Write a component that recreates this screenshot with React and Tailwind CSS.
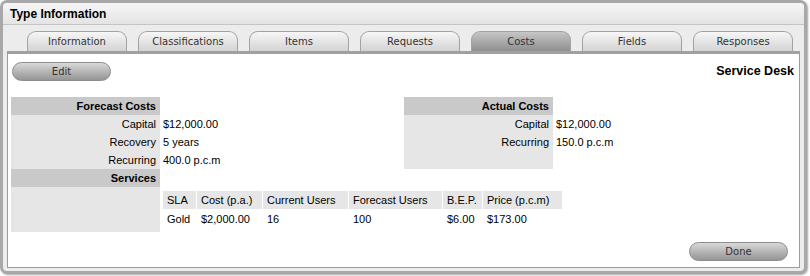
import React from "react";

const tabs = [
  "Information",
  "Classifications",
  "Items",
  "Requests",
  "Costs",
  "Fields",
  "Responses",
];

const services = {
  cols: [
    { label: "SLA", w: "w-[33px]" },
    { label: "Cost (p.a.)", w: "w-[65px]" },
    { label: "Current Users", w: "w-[85px]" },
    { label: "Forecast Users", w: "w-[93px]" },
    { label: "B.E.P.", w: "w-[39px]" },
    { label: "Price (p.c.m)", w: "w-[79px]" },
  ],
  rows: [["Gold", "$2,000.00", "16", "100", "$6.00", "$173.00"]],
};

const PillButton = ({ children }) => (
  <button className="h-[19px] w-[99px] rounded-full border border-[#8c8c8c] bg-linear-to-b from-[#d9d9d9] to-[#959595] font-['DejaVu_Sans',sans-serif] text-[10px] leading-none text-[#333]">
    {children}
  </button>
);

const HeaderCell = ({ children }) => (
  <div className="flex h-[18px] w-[149px] items-center justify-end bg-[#c9c9c9] pr-[4px] font-bold">
    {children}
  </div>
);

const FieldRow = ({ label, value }) => (
  <div className="flex h-[18px]">
    <div className="flex w-[149px] shrink-0 items-center justify-end bg-[#e6e6e6] pr-[4px]">
      {label}
    </div>
    <div className="flex items-center pl-[3px]">{value}</div>
  </div>
);

export default function App() {
  return (
    <div className="h-[276px] w-[810px] bg-white">
      <div className="flex h-[274px] w-[807px] flex-col rounded-[7px] border-[3px] border-[#a8a8a8] bg-[#ececec] shadow-[1px_1px_2px_rgba(0,0,0,0.35)]">
        {/* title bar */}
        <div className="flex h-[22px] items-center rounded-t-[4px] border-b border-[#c4c4c4] bg-linear-to-b from-[#f6f6f6] to-[#e4e4e4] pl-[7px] font-['Liberation_Sans',Arial,sans-serif] text-[12px] font-bold text-black">
          Type Information
        </div>

        {/* tabs */}
        <div className="flex gap-[11px] pl-[24px] pt-[6px]">
          {tabs.map((t) => (
            <div
              key={t}
              className={`flex h-[20px] w-[100px] items-center justify-center rounded-t-[9px] border border-b-0 border-[#a3a3a3] font-['DejaVu_Sans',sans-serif] text-[10px] text-[#333] ${
                t === "Costs"
                  ? "bg-linear-to-b from-[#c6c6c6] to-[#8f8f8f]"
                  : "bg-linear-to-b from-[#f7f7f7] to-[#d3d3d3]"
              }`}
            >
              {t}
            </div>
          ))}
        </div>

        {/* tab body */}
        <div className="mx-[4px] flex flex-1 flex-col border-x border-b border-t-[3px] border-[#9c9c9c] border-t-[#a0a0a0] bg-white font-['Liberation_Sans',Arial,sans-serif] text-[11px] text-black">
          <div className="flex items-center justify-between pl-[4px] pr-[5px] pt-[8px]">
            <PillButton>Edit</PillButton>
            <span className="text-[12.5px] font-bold">Service Desk</span>
          </div>

          <div className="mt-[16px] grid grid-cols-[396px_396px]">
            {/* forecast */}
            <div className="pl-[3px]">
              <HeaderCell>Forecast Costs</HeaderCell>
              <FieldRow label="Capital" value="$12,000.00" />
              <FieldRow label="Recovery" value="5 years" />
              <FieldRow label="Recurring" value="400.0 p.c.m" />
              <HeaderCell>Services</HeaderCell>
              <div className="flex">
                <div className="w-[149px] shrink-0 bg-[#e6e6e6]" />
                <div className="shrink-0 pb-[4px] pl-[3px] pt-[4px]">
                  <div className="flex gap-[1px]">
                    {services.cols.map((c) => (
                      <div
                        key={c.label}
                        className={`flex h-[18px] shrink-0 items-center whitespace-nowrap bg-[#e6e6e6] pl-[4px] ${c.w}`}
                      >
                        {c.label}
                      </div>
                    ))}
                  </div>
                  {services.rows.map((r, i) => (
                    <div key={i} className="mt-[1px] flex gap-[1px]">
                      {r.map((v, j) => (
                        <div
                          key={j}
                          className={`flex h-[18px] shrink-0 items-center whitespace-nowrap pl-[4px] ${services.cols[j].w}`}
                        >
                          {v}
                        </div>
                      ))}
                    </div>
                  ))}
                </div>
              </div>
            </div>

            {/* actual */}
            <div>
              <HeaderCell>Actual Costs</HeaderCell>
              <FieldRow label="Capital" value="$12,000.00" />
              <FieldRow label="Recurring" value="150.0 p.c.m" />
              <FieldRow label="" value="" />
            </div>
          </div>

          <div className="mt-[10px] flex justify-end pr-[11px]">
            <PillButton>Done</PillButton>
          </div>
        </div>
        <div className="h-[3px]" />
      </div>
    </div>
  );
}
